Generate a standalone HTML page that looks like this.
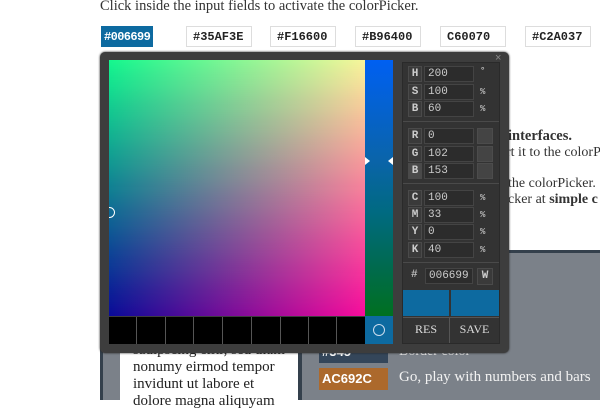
<!DOCTYPE html>
<html><head><style>
*{margin:0;padding:0;box-sizing:border-box}
body{width:600px;height:400px;overflow:hidden;background:#fff;position:relative;font-family:"Liberation Serif",serif;color:#333}
.a{position:absolute;white-space:nowrap}
.mono{font-family:"Liberation Mono",monospace}
.inp{position:absolute;top:26px;height:21px;width:66px;border:1px solid #ddd;background:#fff;font:bold 12px "Liberation Mono",monospace;color:#222;padding:3px 0 0 6px}
.lbl{position:absolute;left:408px;width:14px;height:16px;background:#3a3a3a;border:1px solid #4a4a4a;color:#ccc;font:bold 11px "Liberation Mono",monospace;text-align:center;line-height:14px}
.fld{position:absolute;left:424px;width:50px;height:16px;background:#2c2c2c;border:1px solid #444;color:#ccc;font:11px "Liberation Mono",monospace;padding-left:3px;line-height:14px}
.unit{position:absolute;left:480px;color:#bbb;font:bold 9px "Liberation Mono",monospace;line-height:16px}
.sq{position:absolute;left:477px;width:16px;height:16px;background:#444;border:1px solid #4c4c4c}
.sep{position:absolute;left:403px;width:96px;height:1px;background:#222;border-bottom:1px solid #4a4a4a}
</style></head><body>
<div class="a" style="left:100px;top:-2px;font-size:14.5px;color:#333">Click inside the input fields to activate the colorPicker.</div>
<div class="inp" style="left:101px;width:52px;background:#0d6aa0;color:#fff;border-color:#0d6aa0;padding-left:2px;letter-spacing:-0.6px;overflow:hidden;white-space:nowrap">#006699</div>
<div class="inp" style="left:186px">#35AF3E</div>
<div class="inp" style="left:270px">#F16600</div>
<div class="inp" style="left:355px">#B96400</div>
<div class="inp" style="left:440px">C60070</div>
<div class="inp" style="left:525px">#C2A037</div>

<div class="a" style="left:508px;top:128px;font-size:14.5px;font-weight:bold;color:#333">interfaces.</div>
<div class="a" style="left:506px;top:145px;font-size:14px">rt it to the colorP</div>
<div class="a" style="left:508px;top:176px;font-size:14px">the colorPicker.</div>
<div class="a" style="left:508px;top:192px;font-size:14px">cker at <b>simple c</b></div>

<!-- gray section -->
<div class="a" style="left:100px;top:250px;width:500px;height:150px;background:#7b8189;border-top:3px solid #34404c"></div>
<div class="a" style="left:100px;top:250px;width:3px;height:150px;background:#34404c"></div>
<div class="a" style="left:120px;top:340px;width:182px;height:60px;background:#fff;border-right:4px solid #34404c"></div>
<div class="a" style="left:133px;top:342px;font-size:15px;line-height:17px;color:#222">sadipscing elitr, sed diam<br>nonumy eirmod tempor<br>invidunt ut labore et<br>dolore magna aliquyam</div>
<div class="a" style="left:319px;top:344px;width:69px;height:19px;background:#34465a;color:#fff;font:bold 13px 'Liberation Sans',sans-serif;padding:0 0 0 3px">#345</div>
<div class="a" style="left:399px;top:344px;font-size:14px;color:#eee">Border color</div>
<div class="a" style="left:319px;top:368px;width:69px;height:22px;background:#ac692c;color:#fff;font:bold 13px 'Liberation Sans',sans-serif;padding:3px 0 0 3px">AC692C</div>
<div class="a" style="left:399px;top:369px;font-size:15px;color:#f2f2f2">Go, play with numbers and bars</div>

<!-- picker -->
<div class="a" style="left:100px;top:52px;width:409px;height:301px;background:#3d3d3d;border-radius:5px;box-shadow:0 0 2px #222"></div>
<div class="a" style="left:495px;top:52px;color:#888;font:11px 'Liberation Sans',sans-serif">×</div>
<div class="a" style="left:109px;top:60px;width:256px;height:256px;background:linear-gradient(90deg,#0a0a98,#f80c9c)"></div>
<div class="a" style="left:109px;top:60px;width:256px;height:256px;background:linear-gradient(90deg,#14f88e,#f8f69a);-webkit-mask-image:linear-gradient(180deg,#000,transparent)"></div>
<div class="a" style="left:104px;top:207px;width:11px;height:11px;border:1.5px solid #fff;border-radius:50%;clip-path:inset(0 0 0 5px)"></div>
<div class="a" style="left:365px;top:60px;width:28px;height:256px;background:linear-gradient(180deg,#0060f2 0%,#0a64a8 40%,#006a80 60%,#006a50 80%,#007020 100%)"></div>
<div class="a" style="left:365px;top:157px;width:0;height:0;border:4px solid transparent;border-left:5px solid #fff"></div>
<div class="a" style="left:384px;top:157px;width:0;height:0;border:4px solid transparent;border-right:5px solid #fff"></div>
<div class="a" style="left:109px;top:317px;width:256px;height:27px;background:#000"></div>
<div class="a" style="left:136px;top:317px;width:1px;height:27px;background:#555"></div>
<div class="a" style="left:165px;top:317px;width:1px;height:27px;background:#555"></div>
<div class="a" style="left:193px;top:317px;width:1px;height:27px;background:#555"></div>
<div class="a" style="left:222px;top:317px;width:1px;height:27px;background:#555"></div>
<div class="a" style="left:251px;top:317px;width:1px;height:27px;background:#555"></div>
<div class="a" style="left:280px;top:317px;width:1px;height:27px;background:#555"></div>
<div class="a" style="left:308px;top:317px;width:1px;height:27px;background:#555"></div>
<div class="a" style="left:336px;top:317px;width:1px;height:27px;background:#555"></div>
<div class="a" style="left:365px;top:316px;width:28px;height:28px;background:#0d6aa0"></div>
<div class="a" style="left:373px;top:324px;width:12px;height:12px;border:1.5px solid #cde;border-radius:50%"></div>

<div class="a" style="left:402px;top:62px;width:98px;height:282px;background:#333;border:1px solid #2a2a2a"></div>
<div class="lbl" style="top:66px">H</div><div class="fld" style="top:66px">200</div><div class="unit" style="top:63px">°</div>
<div class="lbl" style="top:84px">S</div><div class="fld" style="top:84px">100</div><div class="unit" style="top:84px">%</div>
<div class="lbl" style="top:101px">B</div><div class="fld" style="top:101px">60</div><div class="unit" style="top:101px">%</div>
<div class="sep" style="top:121px"></div>
<div class="lbl" style="top:128px">R</div><div class="fld" style="top:128px">0</div><div class="sq" style="top:128px"></div>
<div class="lbl" style="top:146px">G</div><div class="fld" style="top:146px">102</div><div class="sq" style="top:146px"></div>
<div class="lbl" style="top:163px;background:#4a4a4a">B</div><div class="fld" style="top:163px">153</div><div class="sq" style="top:163px"></div>
<div class="sep" style="top:183px"></div>
<div class="lbl" style="top:190px">C</div><div class="fld" style="top:190px">100</div><div class="unit" style="top:190px">%</div>
<div class="lbl" style="top:207px">M</div><div class="fld" style="top:207px">33</div><div class="unit" style="top:207px">%</div>
<div class="lbl" style="top:224px">Y</div><div class="fld" style="top:224px">0</div><div class="unit" style="top:224px">%</div>
<div class="lbl" style="top:242px">K</div><div class="fld" style="top:242px">40</div><div class="unit" style="top:242px">%</div>
<div class="sep" style="top:262px"></div>
<div class="a mono" style="left:411px;top:269px;color:#bbb;font-size:11px;font-weight:bold">#</div>
<div class="fld" style="top:268px;left:425px;width:48px">006699</div>
<div class="lbl" style="top:268px;left:477px;width:16px;height:17px">W</div>
<div class="a" style="left:403px;top:290px;width:46px;height:26px;background:#0d6aa0"></div>
<div class="a" style="left:451px;top:290px;width:48px;height:26px;background:#0d6aa0"></div>
<div class="a" style="left:403px;top:317px;width:96px;height:1px;background:#555"></div>
<div class="a" style="left:449px;top:317px;width:1px;height:26px;background:#555"></div>
<div class="a" style="left:403px;top:322px;width:46px;text-align:center;color:#ddd;font-size:12px">RES</div>
<div class="a" style="left:450px;top:322px;width:49px;text-align:center;color:#ddd;font-size:12px">SAVE</div>
</body></html>
